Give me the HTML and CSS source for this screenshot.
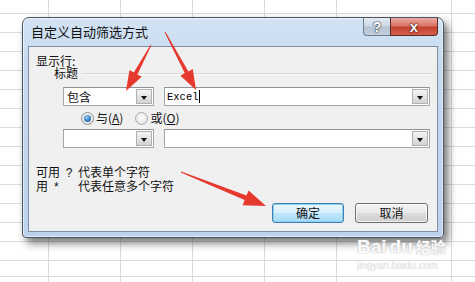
FILE: index.html
```html
<!DOCTYPE html>
<html lang="zh-CN">
<head>
<meta charset="utf-8">
<title>自定义自动筛选方式</title>
<link rel="stylesheet" href="styles.css">
</head>
<body>
<div class="desk">
  <div class="dialog">
    <div class="titlebar">
      <span class="title">自定义自动筛选方式</span>
      <div class="caps">
        <span class="cap help">?</span>
        <span class="cap close">x</span>
      </div>
    </div>
    <div class="client">
      <div class="lbl1">显示行:</div>
      <div class="lbl2"><span>标题</span><span class="etch"></span></div>
      <div class="row r1">
        <div class="combo op"><span class="val">包含</span><span class="drop"></span></div>
        <div class="combo fld"><span class="val mono">Excel</span><span class="caret"></span><span class="drop"></span></div>
      </div>
      <div class="radios">
        <span class="radio on"></span><span class="rlabel">与(<u>A</u>)</span>
        <span class="radio off"></span><span class="rlabel">或(<u>O</u>)</span>
      </div>
      <div class="row r2">
        <div class="combo op"><span class="val"></span><span class="drop"></span></div>
        <div class="combo fld"><span class="val"></span><span class="drop"></span></div>
      </div>
      <div class="notes">
        <div class="note">可用<span class="sym s1">?</span>代表单个字符</div>
        <div class="note">用<span class="sym s2">*</span>代表任意多个字符</div>
      </div>
      <div class="btns">
        <button class="btn def">确定</button>
        <button class="btn">取消</button>
      </div>
    </div>
  </div>

  <svg class="arrows" width="475" height="282" viewBox="0 0 475 282">
    <polygon points="151.4,45.2 137.4,74.4 141.7,76.8 126,91 129.5,70.0 133.8,72.4 150.6,44.8"/>
    <polygon points="164.6,32.2 184.8,73.3 180.4,75.7 196,90 192.8,69.1 188.4,71.5 165.4,31.8"/>
    <polygon points="180.8,172.5 244.7,200.1 242.6,205.2 266,206 248.6,190.4 246.5,195.5 181.2,171.5"/>
  </svg>

  <div class="wm">
    <div class="wm-top"><span class="wm-b">Bai</span><span class="wm-b">du</span><span class="wm-c">经验</span></div>
    <div class="wm-url">jingyan.baidu.com</div>
  </div>
</div>
</body>
</html>
```

FILE: styles.css
```css
html, body {
  margin: 0;
  padding: 0;
}

.desk {
  position: relative;
  width: 475px;
  height: 282px;
  overflow: hidden;
  box-sizing: border-box;
  padding: 17px 0 0 22px;
  background-color: #fff;
  background-image:
    repeating-linear-gradient(to right, transparent 0 48px, #d9dbdd 48px 49px, transparent 49px 72px),
    repeating-linear-gradient(to bottom, transparent 0 13px, #d9dbdd 13px 14px, transparent 14px 19px);
  background-position: -72px 0, 0 -19px;
}

.dialog {
  width: 422px;
  height: 221px;
  box-sizing: border-box;
  border: 1px solid #4d5560;
  border-radius: 7px 7px 4px 4px;
  background: linear-gradient(to bottom, #d3e3f4 0%, #c6daef 20%, #bcd3ec 100%);
  box-shadow: 4px 5px 9px rgba(0, 0, 0, 0.55), inset 0 0 0 1px rgba(255, 255, 255, 0.55);
  display: flex;
  flex-direction: column;
  padding: 0 5px 5px 5px;
}

.titlebar {
  height: 28px;
  display: flex;
  justify-content: space-between;
  align-items: flex-start;
  flex: none;
}

.title {
  margin: 6px 0 0 3px;
  font: 13px/16px "Noto Sans CJK SC", sans-serif;
  color: #111;
}

.caps {
  display: flex;
}

.cap {
  height: 18px;
  box-sizing: border-box;
  display: flex;
  align-items: center;
  justify-content: center;
  font-family: "Liberation Sans", sans-serif;
  font-weight: bold;
  color: #fff;
}

.help {
  width: 27px;
  border: 1px solid #6f7f92;
  border-top: none;
  border-right: none;
  border-radius: 0 0 0 4px;
  background: linear-gradient(to bottom, #e3eaf2 0%, #cdd7e3 48%, #b5c2d1 52%, #c2cedb 100%);
  font-size: 14px;
  text-shadow: 0 0 1px #33414f, 0 0 1px #33414f, 0 0 2px #33414f;
}

.close {
  width: 48px;
  border: 1px solid #5b2a26;
  border-top: none;
  border-radius: 0 0 4px 0;
  background: linear-gradient(to bottom, #eaa99d 0%, #d97668 45%, #c4412f 55%, #d4604c 100%);
  font-size: 15px;
  text-shadow: 0 0 1px #4b1510, 0 0 1px #4b1510, 0 0 2px #4b1510;
}

.client {
  flex: 1;
  background: #f0f0f0;
  border: 1px solid #7f8ea2;
  display: flex;
  flex-direction: column;
  font: 12px "Noto Sans CJK SC", sans-serif;
  color: #111;
}

.lbl1 {
  margin: 8px 0 0 7px;
  height: 12px;
  line-height: 12px;
}

.lbl2 {
  display: flex;
  align-items: center;
  margin-left: 25px;
  height: 12px;
  line-height: 12px;
}

.etch {
  flex: 1;
  height: 0;
  margin: 1px 5px 0 4px;
  border-top: 1px solid #d7d7d7;
  border-bottom: 1px solid #fbfbfb;
}

.row {
  display: flex;
  gap: 10px;
  margin-left: 34px;
  height: 19px;
}

.r1 {
  margin-top: 8px;
}

.r2 {
  margin-top: 4px;
}

.combo {
  box-sizing: border-box;
  height: 19px;
  background: #fff;
  border: 1px solid #a3a6ab;
  border-top-color: #8f9296;
  display: flex;
  align-items: center;
}

.combo.op {
  width: 91px;
}

.combo.fld {
  width: 266px;
}

.val {
  padding-left: 3px;
  line-height: 17px;
  white-space: nowrap;
}

.mono {
  padding-left: 2px;
  font: 10.5px "Liberation Mono", monospace;
  color: #000;
}

.caret {
  width: 1px;
  height: 13px;
  background: #000;
}

.drop {
  margin-left: auto;
  margin-right: 1px;
  width: 16px;
  height: 15px;
  box-sizing: border-box;
  border: 1px solid #b0b0b0;
  background: linear-gradient(to bottom, #f4f4f4 0%, #e3e3e3 50%, #d4d4d4 100%);
  display: flex;
  align-items: center;
  justify-content: center;
}

.drop::after {
  content: "";
  margin-top: 2px;
  border-left: 3.5px solid transparent;
  border-right: 3.5px solid transparent;
  border-top: 4px solid #111;
}

.radios {
  display: flex;
  align-items: center;
  height: 14px;
  margin: 5px 0 0 52px;
}

.radio {
  width: 13px;
  height: 13px;
  box-sizing: border-box;
  border-radius: 50%;
  border: 1px solid #8d8e90;
  background: radial-gradient(circle at 50% 40%, #ffffff 0%, #e6e6e6 70%, #d2d2d2 100%);
  display: flex;
  align-items: center;
  justify-content: center;
}

.radio.on::after {
  content: "";
  width: 7px;
  height: 7px;
  border-radius: 50%;
  background: radial-gradient(circle at 40% 35%, #9fd0f5 0%, #3f8bcb 45%, #1b4f86 100%);
}

.radio.off {
  margin-left: 12px;
  border-color: #a9abad;
}

.rlabel {
  margin-left: 2px;
  line-height: 14px;
}

.rlabel u {
  text-underline-offset: 1px;
}

.notes {
  margin: 17px 0 0 7px;
}

.note {
  height: 14px;
  line-height: 14px;
}

.sym {
  display: inline-block;
  font-family: "Liberation Sans", sans-serif;
}

.s1 {
  width: 18px;
  text-align: center;
}

.s2 {
  width: 30px;
  padding-left: 6px;
  box-sizing: border-box;
}

.btns {
  display: flex;
  justify-content: flex-end;
  gap: 11px;
  margin: 10px 9px 0 0;
}

.btn {
  width: 73px;
  height: 20px;
  padding: 0;
  box-sizing: border-box;
  border: 1px solid #707070;
  border-radius: 3px;
  background: linear-gradient(to bottom, #f4f4f4 0%, #e9e9e9 48%, #dcdcdc 52%, #cfcfcf 100%);
  font: 12px/18px "Noto Sans CJK SC", sans-serif;
  color: #111;
  box-shadow: inset 0 0 0 1px rgba(255, 255, 255, 0.7);
}

.btn.def {
  width: 72px;
  border-color: #3c7fb1;
  background: linear-gradient(to bottom, #eaf6fd 0%, #d9f0fc 48%, #bee6fd 52%, #a7d9f5 100%);
  box-shadow: inset 0 0 0 1px #8ed0f0;
}

.arrows {
  position: absolute;
  left: 0;
  top: 0;
  pointer-events: none;
}

.arrows polygon {
  fill: #e5392d;
}

.wm {
  position: absolute;
  left: 357px;
  top: 236px;
  color: #fafafa;
  pointer-events: none;
}

.wm-top {
  display: flex;
  align-items: baseline;
  height: 22px;
}

.wm-b {
  font: bold 19px/22px "Liberation Sans", sans-serif;
  text-shadow: 0 0 1px #b5b5b5, 0 0 1px #b5b5b5;
}

.wm-b + .wm-b {
  margin-left: 3px;
}

.wm-c {
  margin-left: 3px;
  font: bold 15px/22px "Noto Sans CJK SC", sans-serif;
  text-shadow: 0 0 1px #b5b5b5, 0 0 1px #b5b5b5;
}

.wm-url {
  margin-top: 2px;
  font: 10px/12px "Liberation Sans", sans-serif;
  color: #eeeeee;
  text-shadow: 0 0 1px #cccccc;
}
```
